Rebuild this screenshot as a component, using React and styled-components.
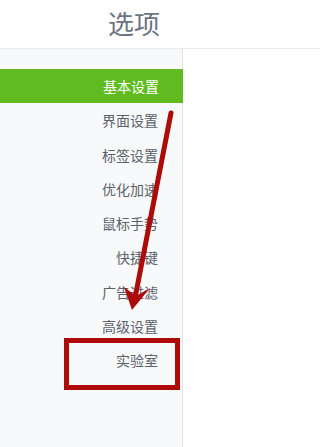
import React from "react";
import styled, { createGlobalStyle } from "styled-components";

const Global = createGlobalStyle`
  html, body { margin: 0; padding: 0; background: #ffffff; }
  body { font-family: "Noto Sans CJK SC", "Noto Sans", sans-serif; }
`;

const Page = styled.div`
  position: relative;
  width: 100%;
  height: 100vh;
  min-height: 447px;
  overflow: hidden;
  background: #ffffff;
  display: flex;
  flex-direction: column;
`;

const Header = styled.header`
  height: 49px;
  flex: none;
  box-sizing: border-box;
  border-bottom: 1px solid #e9eaec;
  padding: 10px 0 0 108px;
  display: flex;
  align-items: flex-start;
`;

const Title = styled.h1`
  margin: 0;
  font-size: 26px;
  line-height: 26px;
  font-weight: 400;
  color: #6b7380;
`;

const Body = styled.div`
  flex: 1;
  display: flex;
`;

const Sidebar = styled.nav`
  width: 182px;
  background: #f8f9fb;
  border-right: 1px solid #e2e4e8;
  padding-top: 20px;
  display: flex;
  flex-direction: column;
`;

const Item = styled.div`
  height: 34.25px;
  line-height: 34px;
  padding-right: 24px;
  text-align: right;
  font-size: 14px;
  color: ${(p) => (p.$active ? "#ffffff" : "#5a616b")};
  background: ${(p) => (p.$active ? "#5fbb1f" : "transparent")};
  margin-right: ${(p) => (p.$active ? "-1px" : "0")};
`;

const Overlay = styled.svg`
  position: absolute;
  left: 0;
  top: 0;
  pointer-events: none;
`;

const HighlightBox = styled.div`
  position: absolute;
  left: 64px;
  top: 338px;
  width: 116px;
  height: 52px;
  box-sizing: border-box;
  border: 5px solid #ad0a0a;
  pointer-events: none;
`;

const items = [
  "基本设置",
  "界面设置",
  "标签设置",
  "优化加速",
  "鼠标手势",
  "快捷键",
  "广告过滤",
  "高级设置",
  "实验室",
];

export default function App() {
  return (
    <>
      <Global />
      <Page>
        <Header>
          <Title>选项</Title>
        </Header>
        <Body>
          <Sidebar>
            {items.map((t, i) => (
              <Item key={t} $active={i === 0}>
                {t}
              </Item>
            ))}
          </Sidebar>
        </Body>
        <HighlightBox />
        <Overlay width="218" height="447" viewBox="0 0 218 447">
          <line
            x1="171"
            y1="113"
            x2="135"
            y2="298"
            stroke="#ad0a0a"
            strokeWidth="5"
            strokeLinecap="round"
          />
          <polygon points="124,287 132,310 150,288 136,296" fill="#ad0a0a" />
        </Overlay>
      </Page>
    </>
  );
}
